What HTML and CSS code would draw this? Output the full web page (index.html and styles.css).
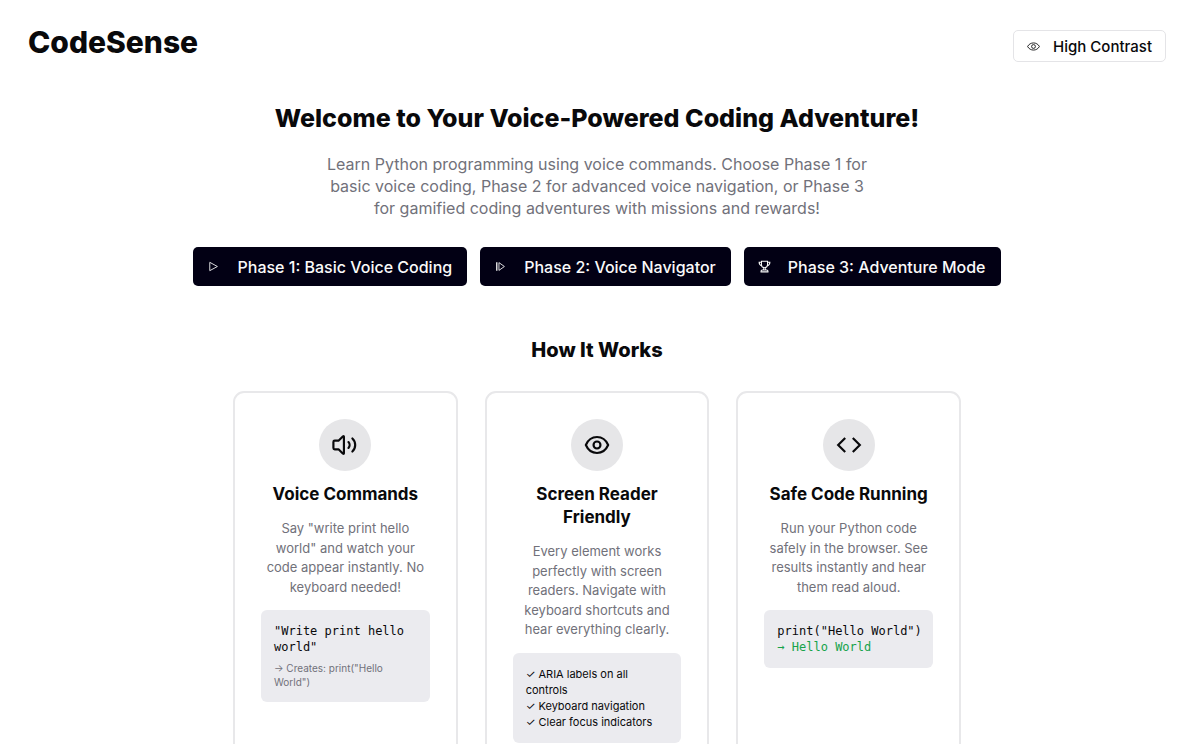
FILE: index.html
```html
<!DOCTYPE html>
<html lang="en">
<head>
<meta charset="utf-8">
<meta name="viewport" content="width=device-width, initial-scale=1">
<title>CodeSense</title>
<link rel="stylesheet" href="styles.css">
</head>
<body>
<header class="header">
  <h1 class="brand">CodeSense</h1>
  <button class="contrast" type="button">
    <svg class="icon-sm" viewBox="0 0 15 15" fill="none" stroke="currentColor" aria-hidden="true"><path d="M.7 7.500C3.500 2 11.500 2 14.300 7.500C11.500 13 3.500 13 .7 7.500Z"/><circle cx="7.500" cy="7.500" r="2.200"/></svg>
    High Contrast
  </button>
</header>
<main>
  <section class="hero">
    <h2 class="hero-title">Welcome to Your Voice-Powered Coding Adventure!</h2>
    <p class="hero-text">Learn Python programming using voice commands. Choose Phase 1 for basic voice coding, Phase 2 for advanced voice navigation, or Phase 3 for gamified coding adventures with missions and rewards!</p>
    <nav class="phases" aria-label="Phases">
      <button class="phase" type="button">
        <svg class="icon-sm" viewBox="0 0 15 15" fill="none" stroke="currentColor" stroke-linejoin="round" aria-hidden="true"><path d="M3.200 2.700L12 7.500L3.200 12.300Z"/></svg>
        Phase 1: Basic Voice Coding
      </button>
      <button class="phase" type="button">
        <svg class="icon-sm" viewBox="0 0 15 15" fill="none" stroke="currentColor" stroke-linejoin="round" aria-hidden="true"><path stroke-width="1.500" d="M3.200 2.500V12.500"/><path d="M5.700 3L12 7.500L5.700 12Z"/></svg>
        Phase 2: Voice Navigator
      </button>
      <button class="phase" type="button">
        <svg class="icon-sm" viewBox="0 0 15 15" fill="none" stroke="currentColor" stroke-width="1.200" aria-hidden="true"><path d="M4 1.500H11V5.500C11 10 4 10 4 5.500ZM4 2.500H1.300C1.300 5 2.500 6 4.300 6.500M11 2.500H13.700C13.700 5 12.500 6 10.700 6.500M6.500 9V11.500M8.500 9V11.500M3.500 13.700V12.700Q3.500 11.500 5 11.500H10Q11.500 11.500 11.500 12.700V13.700Z"/></svg>
        Phase 3: Adventure Mode
      </button>
    </nav>
  </section>
  <section class="how">
    <h2 class="how-title">How It Works</h2>
    <div class="cards">
      <article class="card">
        <div class="badge"><svg class="icon" viewBox="0 0 24 24" aria-hidden="true"><path d="M11 4.300V19.700Q11 20.500 10.200 20L6 16H2.500Q1.300 16 1.300 14.800V9.200Q1.300 8 2.500 8H6L10.200 4Q11 3.500 11 4.300ZM15.200 9.300a4 4 0 0 1 0 5.400M18.800 18a8.200 8.200 0 0 0 0-12"/></svg></div>
        <h3 class="card-title">Voice Commands</h3>
        <p class="card-text">Say "write print hello world" and watch your code appear instantly. No keyboard needed!</p>
        <div class="sample">
          <code class="code">"Write print hello world"</code>
          <p class="note">→ Creates: print("Hello World")</p>
        </div>
      </article>
      <article class="card">
        <div class="badge"><svg class="icon" viewBox="0 0 24 24" aria-hidden="true"><path d="M1.700 12C6 2.200 18 2.200 22.300 12C18 21.800 6 21.800 1.700 12Z"/><circle cx="12" cy="12" r="3.200"/></svg></div>
        <h3 class="card-title">Screen Reader Friendly</h3>
        <p class="card-text">Every element works perfectly with screen readers. Navigate with keyboard shortcuts and hear everything clearly.</p>
        <ul class="sample checks">
          <li>✓ ARIA labels on all controls</li>
          <li>✓ Keyboard navigation</li>
          <li>✓ Clear focus indicators</li>
        </ul>
      </article>
      <article class="card">
        <div class="badge"><svg class="icon icon-sharp" viewBox="0 0 24 24" aria-hidden="true"><path d="m15.500 18.500 6.500-6.500-6.500-6.500M8.500 5.500l-6.500 6.500 6.500 6.500"/></svg></div>
        <h3 class="card-title">Safe Code Running</h3>
        <p class="card-text">Run your Python code safely in the browser. See results instantly and hear them read aloud.</p>
        <div class="sample">
          <code class="code">print("Hello World")</code>
          <code class="code result">→ Hello World</code>
        </div>
      </article>
    </div>
  </section>
</main>
</body>
</html>
```
FILE: styles.css
```css
* {
  box-sizing: border-box;
}

body {
  margin: 0;
  background: #fff;
  color: #09090b;
  font-family: Inter, "Liberation Sans", sans-serif;
}

h1, h2, h3, p, ul {
  margin: 0;
  padding: 0;
}

button {
  display: flex;
  align-items: center;
  font-family: inherit;
  font-weight: 500;
  cursor: pointer;
}

.header {
  display: flex;
  justify-content: space-between;
  padding: 24px 28px 0;
}

.brand {
  font-size: 30px;
  font-weight: 800;
  line-height: 36px;
}

.contrast {
  height: 32px;
  margin-top: 6px;
  padding: 0 13px;
  gap: 13px;
  border: 1px solid #e4e4e7;
  border-radius: 5px;
  background: #fff;
  color: #09090b;
  font-size: 15px;
}

.icon-sm {
  width: 13px;
  height: 13px;
}

.hero {
  display: flex;
  flex-direction: column;
  align-items: center;
  padding: 39px 28px 0;
  text-align: center;
}

.hero-title {
  font-size: 25px;
  font-weight: 800;
  line-height: 34px;
}

.hero-text {
  max-width: 550px;
  margin-top: 18px;
  color: #71717a;
  font-size: 16px;
  line-height: 22px;
}

.phases {
  display: flex;
  flex-wrap: wrap;
  justify-content: center;
  gap: 13px;
  margin-top: 28px;
}

.phase {
  height: 39px;
  padding: 0 15px 0 14px;
  gap: 17px;
  border: 0;
  border-radius: 5px;
  background: #020014;
  color: #fafafa;
  font-size: 16px;
}

.how {
  max-width: 728px;
  margin: 51px auto 0;
}

.how-title {
  font-size: 20px;
  font-weight: 800;
  line-height: 27px;
  text-align: center;
}

.cards {
  display: grid;
  grid-template-columns: repeat(3, 1fr);
  gap: 27px;
  margin-top: 27px;
}

.card {
  display: flex;
  flex-direction: column;
  align-items: center;
  padding: 26px 26px 52px;
  border: 2px solid #e8e8ea;
  border-radius: 11px;
  text-align: center;
}

.badge {
  display: grid;
  place-items: center;
  width: 52px;
  height: 52px;
  border-radius: 50%;
  background: #e6e6e8;
}

.icon {
  width: 26px;
  height: 26px;
  fill: none;
  stroke: currentColor;
  stroke-width: 2;
  stroke-linecap: round;
  stroke-linejoin: round;
}

.icon-sharp {
  stroke-linecap: butt;
  stroke-linejoin: miter;
}

.card-title {
  margin-top: 12px;
  font-size: 17px;
  line-height: 23px;
}

.card-text {
  margin-top: 13px;
  color: #71717a;
  font-size: 13px;
  line-height: 1.5;
}

.sample {
  width: 100%;
  margin-top: 13px;
  padding: 13px 10px 13px 13px;
  border-radius: 6px;
  background: #ebebef;
  text-align: left;
  list-style: none;
}

.code {
  display: block;
  font-family: "DejaVu Sans Mono", monospace;
  font-size: 12px;
  line-height: 16px;
}

.result {
  color: #16a34a;
}

.note {
  margin-top: 6px;
  color: #71717a;
  font-size: 10px;
  line-height: 14px;
}

.checks {
  font-size: 11px;
  line-height: 16px;
}
```
